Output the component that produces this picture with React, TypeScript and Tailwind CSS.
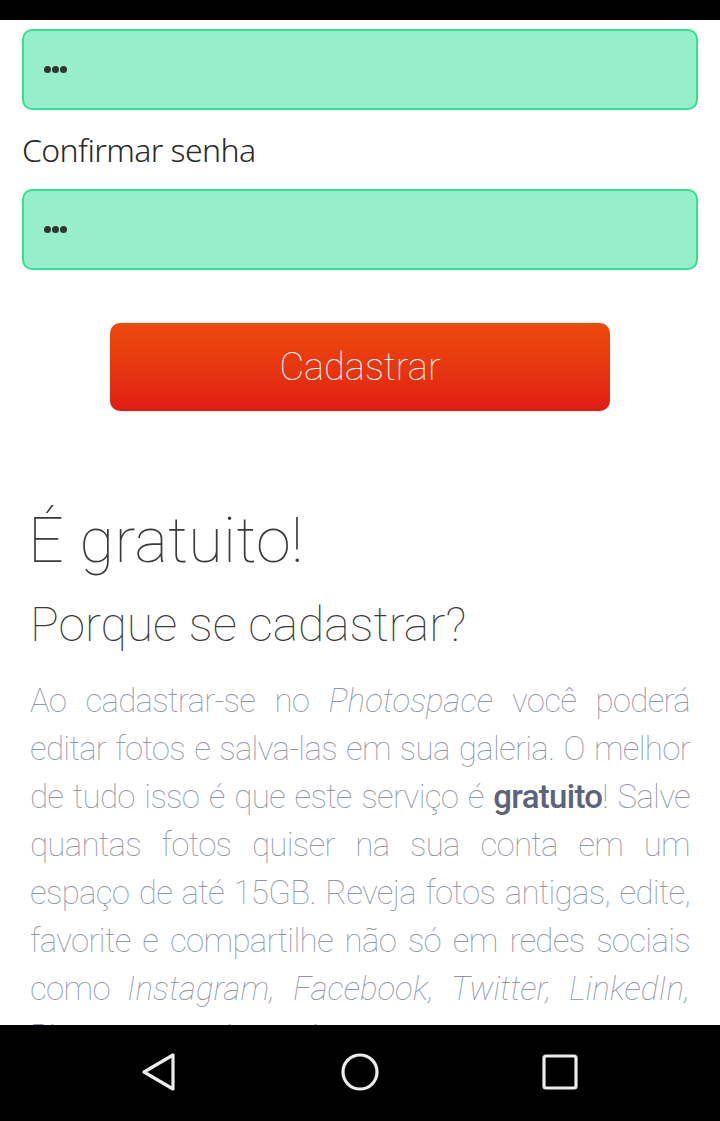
import React from 'react';

const PasswordField = () => (
  <div className="h-[81px] w-full rounded-[10px] border-2 border-[#2ee28f] bg-[#96efc9] flex items-center pl-[20px]">
    <div className="flex gap-[1px]">
      <span className="w-[7px] h-[7px] rounded-full bg-[#333]" />
      <span className="w-[7px] h-[7px] rounded-full bg-[#333]" />
      <span className="w-[7px] h-[7px] rounded-full bg-[#333]" />
    </div>
  </div>
);

const NavBar = () => (
  <div className="h-[96px] shrink-0 bg-black flex items-center justify-center gap-[160px] pb-[2px]">
    <svg width="40" height="40" viewBox="0 0 40 40" fill="none" stroke="#ececec" strokeWidth="3.2" strokeLinejoin="round">
      <path d="M33 3 L33 37 L4 20 Z" />
    </svg>
    <svg width="40" height="40" viewBox="0 0 40 40" fill="none" stroke="#ececec" strokeWidth="3.2">
      <circle cx="20" cy="20" r="17" />
    </svg>
    <svg width="40" height="40" viewBox="0 0 40 40" fill="none" stroke="#ececec" strokeWidth="3.2">
      <rect x="4" y="4" width="32" height="32" rx="2" />
    </svg>
  </div>
);

export default function App() {
  return (
    <div className="h-[1121px] w-[720px] flex flex-col bg-white overflow-hidden">
      <div className="h-[20px] shrink-0 bg-black" />
      <div className="flex-1 overflow-hidden">
        <div className="px-[22px] pt-[9px]">
          <PasswordField />
          <label className="block mt-[21px] mb-[21px] text-[32px] leading-[37px] text-[#2a2a2a] font-light font-['Noto_Sans',sans-serif] tracking-[-0.6px]">
            Confirmar senha
          </label>
          <PasswordField />
          <div className="flex justify-center mt-[53px]">
            <button className="w-[500px] h-[88px] rounded-[10px] bg-gradient-to-b from-[#ed4a0d] to-[#e11c13] text-white text-[38px] font-thin font-['Roboto',sans-serif]">
              Cadastrar
            </button>
          </div>
        </div>
        <div className="px-[30px] pt-[94px] font-['Roboto',sans-serif] text-[#3a3a3a]">
          <h1 className="text-[63px] leading-[72px] font-thin -ml-[2px] tracking-[0.3px]">É gratuito!</h1>
          <h2 className="text-[48px] leading-[60px] font-thin mt-[18px]">Porque se cadastrar?</h2>
          <p className="mt-[22px] text-[33px] leading-[48px] font-thin text-[#8d95a7] text-justify tracking-[-0.7px]">
            Ao cadastrar-se no <i className="tracking-normal">Photospace</i> você poderá editar fotos e salva-las em sua galeria. O melhor de tudo isso é que este serviço é{' '}
            <b className="font-medium text-[#5b6479]">gratuito</b>! Salve quantas fotos quiser na sua conta em um espaço de até 15GB. Reveja fotos antigas, edite, favorite e compartilhe não só em redes sociais como{' '}
            <i className="tracking-normal">Instagram, Facebook, Twitter, LinkedIn,</i> Pinterest e muito mais.
          </p>
        </div>
      </div>
      <NavBar />
    </div>
  );
}
